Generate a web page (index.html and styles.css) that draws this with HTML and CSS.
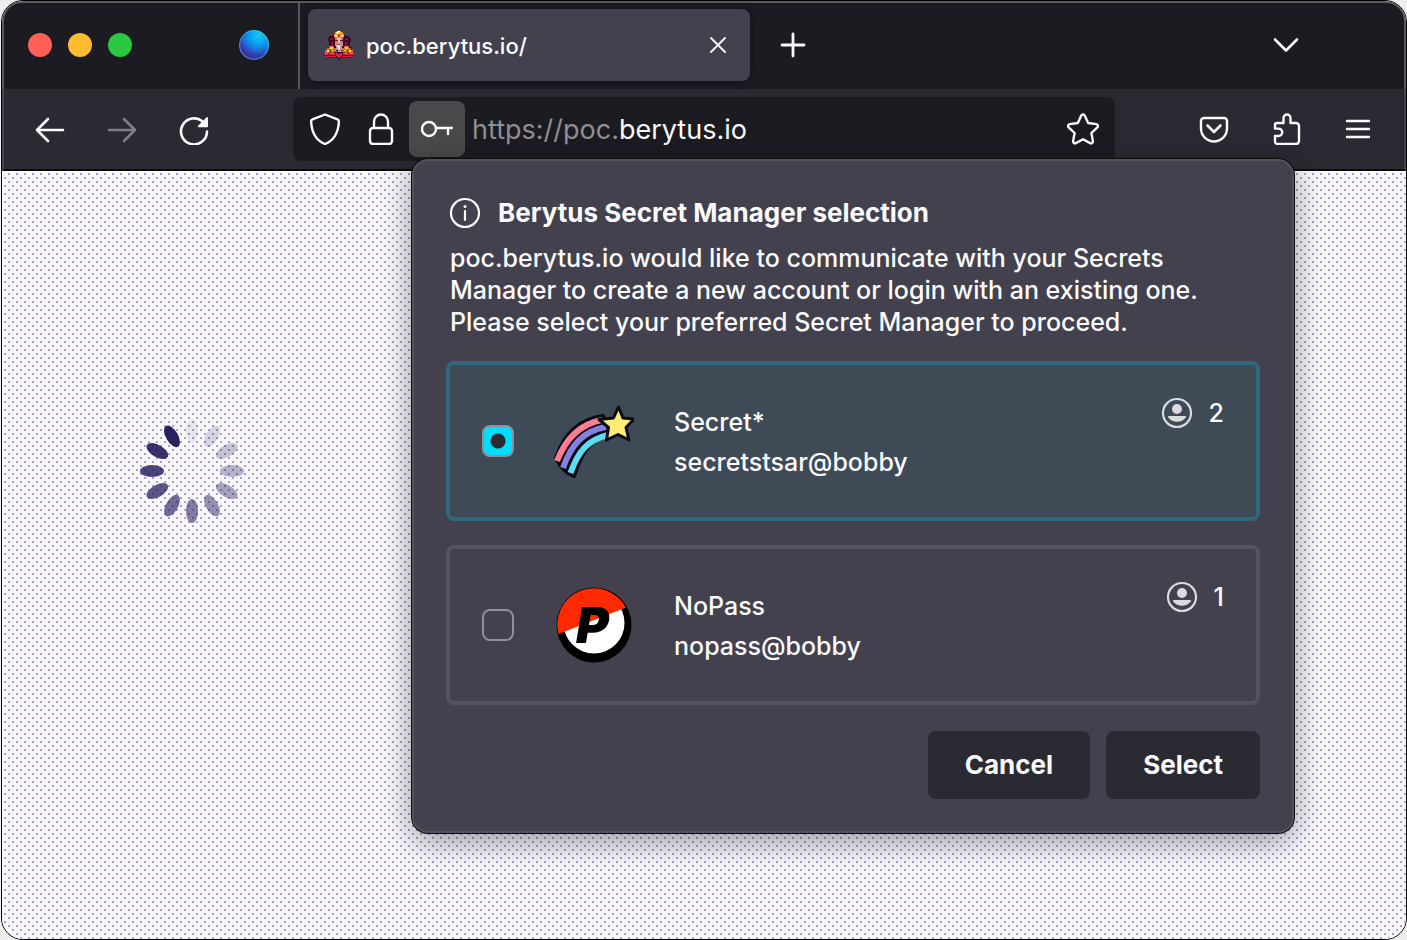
FILE: index.html
```html
<!DOCTYPE html>
<html lang="en">
<head>
<meta charset="utf-8">
<title>poc.berytus.io/</title>
<link rel="stylesheet" href="styles.css">
</head>
<body>
<div class="window">
  <header class="tabbar">
    <div class="lights">
      <button class="light light-close" aria-label="Close window"></button>
      <button class="light light-min" aria-label="Minimize window"></button>
      <button class="light light-max" aria-label="Zoom window"></button>
    </div>
    <svg class="globe" viewBox="0 0 30 30" aria-hidden="true">
      <defs>
        <radialGradient id="globe" cx="0.66" cy="0.16" r="0.9">
          <stop offset="0" stop-color="#1fc4ee"/><stop offset="0.3" stop-color="#03a9f4"/>
          <stop offset="0.55" stop-color="#1778dc"/><stop offset="0.8" stop-color="#3a36a8"/><stop offset="1" stop-color="#37308f"/>
        </radialGradient>
        <linearGradient id="rim" x1="1" y1="0" x2="0" y2="1">
          <stop offset="0" stop-color="#4fe3c8"/><stop offset="0.5" stop-color="#2a8ae0"/><stop offset="1" stop-color="#6a74cf"/>
        </linearGradient>
      </defs>
      <circle cx="15" cy="15" r="14.4" fill="url(#globe)" stroke="url(#rim)" stroke-width="1.2"/>
    </svg>
    <div class="tab">
      <svg class="favicon" viewBox="0 0 30 30" shape-rendering="crispEdges" aria-hidden="true">
        <path fill="#3b0a2a" d="M9 5h12v1h4v2h2v3h-1v6h2v4H3v-4h2v-6H4V8h1V6h4z"/>
        <path fill="#8a1338" d="M6 8h3v2H6zM21 8h3v2h-3zM7 12h2v4H7zM21 12h2v4h-2z"/>
        <path fill="#f0982c" d="M13 1h4v1h2v2h1v4H10V4h1V2h2z"/>
        <path fill="#ffe27a" d="M12 2h4v2h-4zM11 5h2v2h-2zM17 5h2v2h-2z"/>
        <path fill="#fffbe6" d="M13 1h3v1h-3z"/>
        <path fill="#c8452e" d="M14 4h2v3h-2zM10 7h2v1h-2zM18 7h2v1h-2z"/>
        <path fill="#d9706a" d="M11 8h8v6h-8z"/>
        <path fill="#f6c0a6" d="M13 8h4v2h-4zM14 10h2v3h-2z"/>
        <path fill="#5b1a3c" d="M11 10h3v1h-3zM16 10h3v1h-3z"/>
        <path fill="#b79aa9" d="M11 13h8v3h-1v4h-1v2h-3v-2h-2v-4h-1z"/>
        <path fill="#f0e6ea" d="M13 14h3v5h-2v-2h-1z"/>
        <path fill="#a83a2c" d="M13 14h3v1h-3z"/>
        <path fill="#d9692b" d="M5 16h5v2h2v3h1v3H1v-4h2v-2h2zM20 16h5v2h2v2h2v4H17v-3h1v-3h2z"/>
        <path fill="#ffd65c" d="M6 17h3v2H6zM3 20h2v2H3zM21 17h3v2h-3zM25 20h2v2h-2zM8 20h2v1H8zM20 20h2v1h-2z"/>
        <path fill="#7c1f33" d="M6 20h1v3H6zM9 22h3v1H9zM18 22h3v1h-3zM23 20h1v3h-1zM4 23h2v1H4zM24 23h2v1h-2z"/>
        <path fill="#d11f45" d="M0 24h30v1H0zM1 26h28v1H1z"/>
        <path fill="#5c0c31" d="M0 25h30v1H0zM3 27h24v1H3z"/>
        <path fill="#3b0a2a" d="M11 22h8v4h-1v2h-2v2h-2v-2h-2v-2h-1z"/>
        <path fill="#e2202f" d="M12 23h2v1h2v-1h2v3h-1v1h-1v1h-2v-1h-1v-1h-1z"/>
      </svg>
      <span class="tab-title">poc.berytus.io/</span>
      <button class="tab-close" aria-label="Close tab">
        <svg class="icon-close" viewBox="0 0 16 16" aria-hidden="true"><path d="M1 1l14 14M15 1L1 15" fill="none" stroke="currentColor" stroke-width="1.8" stroke-linecap="round"/></svg>
      </button>
    </div>
    <button class="tab-new" aria-label="New tab">
      <svg class="icon" viewBox="0 0 32 32" aria-hidden="true"><path d="M16 5v22M5 16h22" fill="none" stroke="currentColor" stroke-width="2.8" stroke-linecap="round"/></svg>
    </button>
    <button class="tab-list" aria-label="List all tabs">
      <svg class="icon" viewBox="0 0 32 32" aria-hidden="true"><path d="M5 10.500l11 11 11-11" fill="none" stroke="currentColor" stroke-width="2.6" stroke-linecap="round" stroke-linejoin="round"/></svg>
    </button>
  </header>

  <nav class="toolbar">
    <button class="tool" aria-label="Back">
      <svg class="icon" viewBox="0 0 32 32" aria-hidden="true"><path d="M29 17H3M14 6L3 17l11 11" fill="none" stroke="currentColor" stroke-width="2.6" stroke-linecap="round" stroke-linejoin="round"/></svg>
    </button>
    <button class="tool" aria-label="Forward" disabled>
      <svg class="icon" viewBox="0 0 32 32" aria-hidden="true"><path d="M3 17h26M18 6l11 11-11 11" fill="none" stroke="currentColor" stroke-width="2.6" stroke-linecap="round" stroke-linejoin="round"/></svg>
    </button>
    <button class="tool" aria-label="Reload">
      <svg class="icon" viewBox="0 0 32 32" aria-hidden="true"><path d="M25 9A13 13 0 1 0 29 18.500" fill="none" stroke="currentColor" stroke-width="2.6" stroke-linecap="round"/><path d="M30 5v8.500a.8.8 0 0 1-.8.8h-8.500c-.8 0-1.200-.9-.6-1.500l8.500-8.500c.6-.6 1.400-.1 1.400.7z" fill="currentColor"/></svg>
    </button>
    <div class="urlbar">
      <button class="url-btn" aria-label="Tracking protection">
        <svg class="icon" viewBox="0 0 32 32" aria-hidden="true"><path d="M16 1.500l12.500 4.800c1 .4 1.500 1.200 1.400 2.200C29.300 20 25 27.500 16 31 7 27.500 2.700 20 2.100 8.500c-.1-1 .4-1.800 1.400-2.200z" fill="none" stroke="currentColor" stroke-width="2.400" stroke-linejoin="round"/></svg>
      </button>
      <button class="url-btn" aria-label="Site security">
        <svg class="icon" viewBox="0 0 32 32" aria-hidden="true"><path d="M9 15V8.500a7 7 0 0 1 14 0V15" fill="none" stroke="currentColor" stroke-width="2.400"/><rect x="5" y="15" width="22" height="16" rx="3" fill="none" stroke="currentColor" stroke-width="2.400"/></svg>
      </button>
      <button class="url-btn url-btn-open" aria-label="Secret manager">
        <svg class="icon" viewBox="0 0 32 32" aria-hidden="true"><circle cx="8" cy="16" r="7" fill="none" stroke="currentColor" stroke-width="2.400"/><path d="M15 15h16M27 15v6" fill="none" stroke="currentColor" stroke-width="2.400" stroke-linecap="round"/></svg>
      </button>
      <div class="url" role="textbox" aria-label="Address" contenteditable="true" spellcheck="false"><span class="url-dim">https://poc.</span>berytus.io</div>
      <button class="url-btn" aria-label="Bookmark this page">
        <svg class="icon" viewBox="0 0 32 32" aria-hidden="true"><path d="M14.300 2.500c.7-1.500 2.700-1.500 3.400 0l3.500 7.500 8.100 1.100c1.600.2 2.200 2.100 1.100 3.200l-6 5.700 1.500 8.100c.3 1.600-1.300 2.800-2.800 2l-7.100-3.900-7.100 3.900c-1.500.8-3.100-.4-2.800-2L7.600 20l-6-5.700c-1.100-1.100-.5-3 1.100-3.200l8.100-1.100z" fill="none" stroke="currentColor" stroke-width="2.400" stroke-linejoin="round"/></svg>
      </button>
    </div>
    <button class="tool" aria-label="Save to Pocket">
      <svg class="icon" viewBox="0 0 32 32" aria-hidden="true"><path d="M6 5h20a3 3 0 0 1 3 3v7.500a13 13 0 0 1-26 0V8a3 3 0 0 1 3-3z" fill="none" stroke="currentColor" stroke-width="2.400"/><path d="M9.500 12.500L16 19l6.500-6.500" fill="none" stroke="currentColor" stroke-width="2.600" stroke-linecap="round" stroke-linejoin="round"/></svg>
    </button>
    <button class="tool" aria-label="Extensions">
      <svg class="icon" viewBox="0 0 32 32" aria-hidden="true"><path d="M7 10h6.500V5a3.500 3.500 0 0 1 7 0v5H26a3 3 0 0 1 3 3v15a3 3 0 0 1-3 3H7.500a2.500 2.500 0 0 1-2.500-2.500V23h3.500a3.700 3.700 0 0 0 0-7.400H5V12a2 2 0 0 1 2-2z" fill="none" stroke="currentColor" stroke-width="2.400" stroke-linejoin="round"/></svg>
    </button>
    <button class="tool" aria-label="Open application menu">
      <svg class="icon" viewBox="0 0 32 32" aria-hidden="true"><path d="M5 8h22M5 16h22M5 24h22" fill="none" stroke="currentColor" stroke-width="2.400" stroke-linecap="round"/></svg>
    </button>
  </nav>

  <main class="page">
    <svg class="spinner" viewBox="-52 -52 104 104" fill="#26215f" role="img" aria-label="Loading">
      <ellipse cy="-40" rx="6" ry="12" opacity="0.08"/>
      <ellipse cy="-40" rx="6" ry="12" opacity="0.16" transform="rotate(30)"/>
      <ellipse cy="-40" rx="6" ry="12" opacity="0.24" transform="rotate(60)"/>
      <ellipse cy="-40" rx="6" ry="12" opacity="0.32" transform="rotate(90)"/>
      <ellipse cy="-40" rx="6" ry="12" opacity="0.4" transform="rotate(120)"/>
      <ellipse cy="-40" rx="6" ry="12" opacity="0.48" transform="rotate(150)"/>
      <ellipse cy="-40" rx="6" ry="12" opacity="0.57" transform="rotate(180)"/>
      <ellipse cy="-40" rx="6" ry="12" opacity="0.66" transform="rotate(210)"/>
      <ellipse cy="-40" rx="6" ry="12" opacity="0.75" transform="rotate(240)"/>
      <ellipse cy="-40" rx="6" ry="12" opacity="0.83" transform="rotate(270)"/>
      <ellipse cy="-40" rx="6" ry="12" opacity="0.92" transform="rotate(300)"/>
      <ellipse cy="-40" rx="6" ry="12" transform="rotate(330)"/>
    </svg>
  </main>

  <form class="panel" role="dialog" aria-labelledby="panel-title">
    <div class="panel-head">
      <svg class="icon" viewBox="0 0 32 32" aria-hidden="true"><circle cx="16" cy="16" r="14" fill="none" stroke="currentColor" stroke-width="2.200"/><path d="M16 14v9" stroke="currentColor" stroke-width="2.200" stroke-linecap="round"/><circle cx="16" cy="9.500" r="1.500" fill="currentColor"/></svg>
      <h1 class="panel-title" id="panel-title">Berytus Secret Manager selection</h1>
    </div>
    <p class="panel-text">poc.berytus.io would like to communicate with your Secrets Manager to create a new account or login with an existing one. Please select your preferred Secret Manager to proceed.</p>

    <div class="choices">
      <label class="choice">
        <input class="choice-radio" type="radio" name="manager" checked>
        <svg class="choice-logo" viewBox="0 0 80 80" aria-hidden="true">
          <path d="M2 57C10 33 26 18 49 15l6 18C37 38 28 51 20 75Q9 71 2 57z" fill="#0b0b12" stroke="#0b0b12" stroke-width="4" stroke-linejoin="round"/>
          <path d="M3 60C12 37 26 23 48 19" fill="none" stroke="#ff7b93" stroke-width="6"/>
          <path d="M9 67C17 44 29 30 52 26" fill="none" stroke="#8480df" stroke-width="6"/>
          <path d="M16.500 72C24 51 33 39 54 34" fill="none" stroke="#5fdcf4" stroke-width="6"/>
          <path d="M64.500 6l4.500 11 11 1-8 8.500 3 12.500-11-5.500-11.500 5.500 2-12.500L45 18.500l14.500-1.500z" fill="#ffed75" stroke="#0b0b12" stroke-width="3" stroke-linejoin="round"/>
        </svg>
        <span class="choice-body"><span>Secret*</span><span>secretstsar@bobby</span></span>
        <span class="choice-count">
          <svg class="icon icon-user" viewBox="0 0 32 32" aria-hidden="true"><circle cx="16" cy="16" r="14" fill="none" stroke="currentColor" stroke-width="2.200"/><circle cx="16" cy="12" r="5" fill="currentColor"/><path d="M8 19h16c1 0 1.300.7.8 1.400a11 11 0 0 1-17.600 0C6.700 19.700 7 19 8 19z" fill="currentColor"/></svg>
          <span>2</span>
        </span>
      </label>
      <label class="choice">
        <input class="choice-radio" type="radio" name="manager">
        <svg class="choice-logo" viewBox="0 0 80 80" aria-hidden="true">
          <circle cx="40" cy="40" r="37.500" fill="#000"/>
          <circle cx="40" cy="38" r="30.500" fill="#fff"/>
          <path d="M4.500 49A36.500 36.500 0 0 1 72 22.500z" fill="#ff2a04"/>
          <text class="logo-letter" x="22" y="58">P</text>
        </svg>
        <span class="choice-body"><span>NoPass</span><span>nopass@bobby</span></span>
        <span class="choice-count">
          <svg class="icon icon-user" viewBox="0 0 32 32" aria-hidden="true"><circle cx="16" cy="16" r="14" fill="none" stroke="currentColor" stroke-width="2.200"/><circle cx="16" cy="12" r="5" fill="currentColor"/><path d="M8 19h16c1 0 1.300.7.8 1.400a11 11 0 0 1-17.600 0C6.700 19.700 7 19 8 19z" fill="currentColor"/></svg>
          <span>1</span>
        </span>
      </label>
    </div>

    <div class="actions">
      <button class="action" type="button">Cancel</button>
      <button class="action" type="button">Select</button>
    </div>
  </form>
</div>
</body>
</html>
```
FILE: styles.css
```css
* { box-sizing: border-box; }

body {
  margin: 0;
  background: #eeeeee;
  color: #fbfbfe;
  font-family: Inter, "Liberation Sans", sans-serif;
  font-size: 25px;
  font-weight: 500;
  line-height: 32px;
}

button {
  display: flex;
  align-items: center;
  justify-content: center;
  margin: 0;
  padding: 0;
  border: 0;
  background: none;
  color: inherit;
  font: inherit;
}

svg { display: block; flex: none; }

.icon { width: 32px; height: 32px; }

.window {
  position: relative;
  display: flex;
  flex-direction: column;
  min-height: 100vh;
  margin-left: 1px;
  border: 1px solid #000;
  border-radius: 22px;
  overflow: hidden;
}

/* Tab strip */
.tabbar {
  display: flex;
  align-items: center;
  height: 88px;
  padding: 0 16px 2px 24px;
  border: 2px solid #5a5960;
  border-bottom: 0;
  border-radius: 20px 20px 0 0;
  background: #1c1b22;
}

.lights { display: flex; gap: 16px; }
.light { width: 24px; height: 24px; border-radius: 50%; }
.light-close { background: #ff5f57; }
.light-min { background: #febc2e; }
.light-max { background: #28c840; }

.globe { width: 30px; height: 30px; margin-left: 107px; }

.tab {
  position: relative;
  display: flex;
  align-items: center;
  width: 442px;
  height: 72px;
  margin-left: 39px;
  padding: 0 16px;
  gap: 12px;
  border-radius: 8px;
  background: #42414d;
  box-shadow: 0 0 8px rgba(0, 0, 0, 0.4);
}

.tab::before {
  content: "";
  position: absolute;
  top: -8px;
  bottom: -8px;
  left: -10px;
  width: 2px;
  background: #5a5960;
}

.favicon { width: 30px; height: 30px; }
.tab-title { flex: 1; padding-top: 2px; font-size: 22px; }
.tab-close { width: 32px; height: 32px; }
.icon-close { width: 16px; height: 16px; }
.tab-new { width: 64px; height: 64px; margin-left: 11px; }
.tab-list { width: 64px; height: 64px; margin-left: auto; margin-right: 70px; }

/* Navigation toolbar */
.toolbar {
  display: flex;
  align-items: center;
  gap: 8px;
  height: 82px;
  padding: 0 14px;
  border: 2px solid #45444d;
  border-top: 0;
  border-bottom: 2px solid #0c0c0d;
  background: #2b2a33;
}

.tool { width: 64px; height: 64px; }
.tool:disabled { opacity: 0.4; }

.urlbar {
  display: flex;
  flex: 1;
  align-items: center;
  height: 64px;
  margin: 0 59px;
  padding: 0 4px;
  border-radius: 8px;
  background: #1c1b22;
}

.url-btn { width: 56px; height: 56px; border-radius: 8px; }
.url-btn-open { background: #4a4a4d; }

.url {
  flex: 1;
  padding: 2px 0 0 7px;
  outline: 0;
  font-size: 27px;
  font-weight: 400;
  white-space: nowrap;
}

.url-dim { color: #8f8f94; }

/* Page area */
.page {
  flex: 1;
  padding: 248px 138px;
  background:
    url("data:image/svg+xml,%3Csvg xmlns='http://www.w3.org/2000/svg' width='8' height='8' fill='%23b196dd'%3E%3Cpath d='M6 2h2v2H6zM2 6h2v2H2z'/%3E%3C/svg%3E"),
    #f8f8f8;
}

.spinner { width: 104px; height: 104px; }

/* Secret manager popup */
.panel {
  position: absolute;
  top: 158px;
  left: 410px;
  width: 882px;
  max-width: calc(100% - 16px);
  margin: 0;
  padding: 32px;
  border: 2px solid #52515e;
  border-radius: 16px;
  background: #42414d;
  box-shadow: 0 0 0 1px #0c0c0d, 0 8px 32px rgba(0, 0, 0, 0.4);
}

.panel-head {
  display: flex;
  align-items: center;
  gap: 17px;
  height: 40px;
  padding: 0 3px;
}

.panel-title { margin: 0; font-size: 26px; font-weight: 700; line-height: 32px; }
.panel-text { margin: 9px 4px 23px; }

.choices { display: grid; gap: 24px; }

.choice {
  display: flex;
  align-items: center;
  gap: 40px;
  min-height: 160px;
  padding: 32px;
  border: 4px solid #53525e;
  border-radius: 8px;
}

.choice:has(:checked) { border-color: #32667a; background: #3f4a57; }

.choice-radio {
  appearance: none;
  flex: none;
  width: 32px;
  height: 32px;
  margin: 0;
  border: 2px solid #8f8f9d;
  border-radius: 8px;
}

.choice-radio:checked {
  background: radial-gradient(circle, #2b2a33 0 7px, #00ddff 8px);
}

.choice-logo { width: 80px; height: 80px; }
.logo-letter { font-family: Inter, sans-serif; font-size: 50px; font-style: italic; font-weight: 900; }

.choice-body { display: grid; flex: 1; padding-top: 2px; line-height: 40px; }

.choice-count {
  display: flex;
  align-self: flex-start;
  align-items: center;
  gap: 16px;
}

.icon-user { color: #dadadf; }

.actions {
  display: flex;
  justify-content: flex-end;
  gap: 16px;
  margin-top: 26px;
}

.action {
  height: 68px;
  padding: 0 37px;
  border-radius: 8px;
  background: #2b2a33;
  font-size: 26px;
  font-weight: 700;
}
```
